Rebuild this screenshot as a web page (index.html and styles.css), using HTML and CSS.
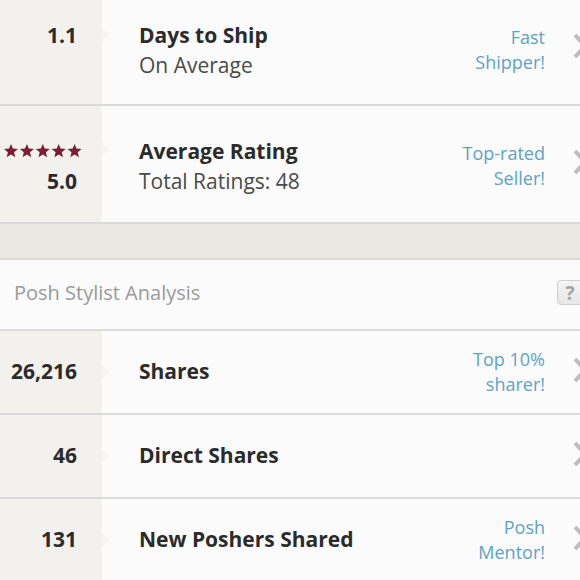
FILE: index.html
```html
<!DOCTYPE html>
<html>
<head>
<meta charset="utf-8">
<link rel="stylesheet" href="styles.css">
</head>
<body>
<div class="page">
  <div class="row row-first">
    <div class="num"><div class="line">1.1</div><div class="line"></div></div>
    <div class="main">
      <div class="label"><div class="title">Days to Ship</div><div class="sub">On Average</div></div>
      <div class="badge">Fast<br>Shipper!</div>
      <div class="chev"><svg width="16" height="26" viewBox="0 0 16 26"><path d="M2 2 L12 13 L2 24" fill="none" stroke="#bdbdbd" stroke-width="4"/></svg></div>
    </div>
  </div>
  <div class="row row-rating">
    <div class="num">
      <div class="line stars">
        <svg width="78" height="14" viewBox="0 0 78 14">
          <g fill="#7b1f35">
            <path id="s" d="M7 0 L8.9 4.6 L14 5 L10.1 8.3 L11.3 13.3 L7 10.6 L2.7 13.3 L3.9 8.3 L0 5 L5.1 4.6 Z"/>
            <use href="#s" x="15.9"/>
            <use href="#s" x="31.8"/>
            <use href="#s" x="47.7"/>
            <use href="#s" x="63.6"/>
          </g>
        </svg>
      </div>
      <div class="line">5.0</div>
    </div>
    <div class="main">
      <div class="label"><div class="title">Average Rating</div><div class="sub">Total Ratings: 48</div></div>
      <div class="badge">Top-rated<br>Seller!</div>
      <div class="chev"><svg width="16" height="26" viewBox="0 0 16 26"><path d="M2 2 L12 13 L2 24" fill="none" stroke="#bdbdbd" stroke-width="4"/></svg></div>
    </div>
  </div>
  <div class="band"></div>
  <div class="section-head">
    <span class="section-title">Posh Stylist Analysis</span>
    <span class="help">?</span>
  </div>
  <div class="row row-small">
    <div class="num"><div class="line">26,216</div></div>
    <div class="main">
      <div class="label"><div class="title">Shares</div></div>
      <div class="badge">Top 10%<br>sharer!</div>
      <div class="chev"><svg width="16" height="26" viewBox="0 0 16 26"><path d="M2 2 L12 13 L2 24" fill="none" stroke="#bdbdbd" stroke-width="4"/></svg></div>
    </div>
  </div>
  <div class="row row-small">
    <div class="num"><div class="line">46</div></div>
    <div class="main">
      <div class="label"><div class="title">Direct Shares</div></div>
      <div class="badge"></div>
      <div class="chev"><svg width="16" height="26" viewBox="0 0 16 26"><path d="M2 2 L12 13 L2 24" fill="none" stroke="#bdbdbd" stroke-width="4"/></svg></div>
    </div>
  </div>
  <div class="row row-small row-last">
    <div class="num"><div class="line">131</div></div>
    <div class="main">
      <div class="label"><div class="title">New Poshers Shared</div></div>
      <div class="badge">Posh<br>Mentor!</div>
      <div class="chev"><svg width="16" height="26" viewBox="0 0 16 26"><path d="M2 2 L12 13 L2 24" fill="none" stroke="#bdbdbd" stroke-width="4"/></svg></div>
    </div>
  </div>
</div>
</body>
</html>
```

FILE: styles.css
```css
html, body {
  margin: 0;
  padding: 0;
  background: #fbfbfb;
  overflow: hidden;
}
body {
  font-family: "Open Sans", Lato, sans-serif;
  color: #2b2b2b;
  width: 580px;
  height: 580px;
}
.page {
  display: flex;
  flex-direction: column;
}
.row {
  display: flex;
  border-bottom: 2px solid #dadada;
  flex-shrink: 0;
}
.row-first { height: 104px; }
.row-rating { height: 116px; }
.row-small { height: 82px; }
.row-last { border-bottom: none; }
.num {
  width: 102px;
  background: #f3f1ed;
  display: flex;
  flex-direction: column;
  justify-content: center;
  align-items: flex-end;
  padding-right: 25px;
  box-sizing: border-box;
  position: relative;
}
.row-first .num, .row-first .main { padding-bottom: 5px; }
.row-rating .num, .row-rating .main { padding-top: 3px; }
.row-small .num, .row-small .main { padding-bottom: 3px; }
.num::after {
  content: "";
  position: absolute;
  right: -7px;
  top: 50%;
  margin-top: -7px;
  border-left: 7px solid #f6f5f3;
  border-top: 7px solid transparent;
  border-bottom: 7px solid transparent;
}
.row-first .num::after { top: 35px; }
.row-rating .num::after { top: 43px; }
.line {
  height: 30px;
  line-height: 30px;
  font-size: 21px;
  font-weight: 700;
  color: #2b2b2b;
}
.stars {
  display: flex;
  align-items: center;
  margin-right: -5px;
}
.stars svg { display: block; }
.main {
  flex: 1;
  display: flex;
  align-items: center;
  padding-left: 37px;
  background: #fbfbfb;
}
.label { flex: 1; }
.title {
  font-size: 21px;
  font-weight: 700;
  line-height: 30px;
  color: #2b2b2b;
}
.sub {
  font-size: 21px;
  line-height: 30px;
  color: #4a4a4a;
}
.badge {
  text-align: right;
  color: #5ba3c8;
  font-size: 18px;
  line-height: 25px;
}
.row-small .badge { margin-top: 3px; }
.chev {
  width: 7px;
  margin-left: 28px;
  overflow: hidden;
  align-self: center;
  margin-top: -8px;
}
.chev svg { display: block; }
.row-small .chev { margin-top: -2px; }
.band {
  height: 34px;
  background-color: #ebe8e3;
  border-bottom: 2px solid #dcdad6;
  flex-shrink: 0;
}
.section-head {
  height: 69px;
  display: flex;
  align-items: center;
  padding-left: 14px;
  border-bottom: 2px solid #dadada;
  background: #fbfbfb;
  flex-shrink: 0;
}
.section-title {
  flex: 1;
  font-size: 20px;
  color: #9a9a9a;
  margin-top: -4px;
}
.help {
  width: 26px;
  height: 25px;
  margin-right: -3px;
  margin-top: -4px;
  border: 1px solid #d0d0d0;
  border-radius: 4px;
  background: linear-gradient(#f4f4f4, #e6e6e6);
  color: #a3a3a3;
  font-weight: 700;
  font-size: 19px;
  display: flex;
  align-items: center;
  justify-content: center;
  box-sizing: border-box;
}
```
